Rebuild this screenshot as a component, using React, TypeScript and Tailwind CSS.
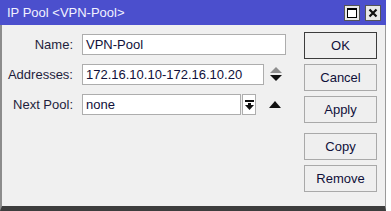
import React from "react";

const font = { fontFamily: '"Liberation Sans", Arial, sans-serif' };

const Field = ({ label, children }: { label: string; children: React.ReactNode }) => (
  <div className="flex items-center h-[21px]">
    <div className="w-[72px] text-right text-[13px] text-[#1e1e3c] pr-[1px]">{label}</div>
    <div className="ml-[8px] flex items-center h-full">{children}</div>
  </div>
);

const Input = ({ value, w }: { value: string; w: string }) => (
  <div
    className={`${w} h-full bg-white border border-[#adadad] flex items-center pl-[3px] text-[13px] text-[#10103a] leading-none`}
  >
    {value}
  </div>
);

const Btn = ({ label, primary, extra = "" }: { label: string; primary?: boolean; extra?: string }) => (
  <div
    className={`w-[73px] h-[27px] flex items-center justify-center text-[13px] text-[#10103a] bg-[#efefef] border ${
      primary ? "border-[#3c3c3c]" : "border-[#a9a9a9]"
    } ${extra}`}
  >
    {label}
  </div>
);

export default function App() {
  return (
    <div className="w-[391px] h-[211px] bg-white overflow-hidden" style={font}>
      <div className="w-[386px] h-[211px] flex flex-col">
        {/* title bar */}
        <div className="h-[25px] bg-[#4b4fcd] flex items-center pl-[7px] pr-[5px]">
          <span className="text-[13px] text-[#f2f2ff] flex-1">IP Pool &lt;VPN-Pool&gt;</span>
          <div className="flex gap-[5px]">
            <div className="w-[16px] h-[16px] bg-[#e8e8e8] border border-[#555] flex items-center justify-center">
              <div className="w-[10px] h-[10px] border border-black border-t-2 bg-white" />
            </div>
            <div className="w-[16px] h-[16px] bg-[#e8e8e8] border border-[#555] flex items-center justify-center">
              <svg width="10" height="10" viewBox="0 0 10 10">
                <path d="M1.5 1.5 L8.5 8.5 M8.5 1.5 L1.5 8.5" stroke="#111" strokeWidth="2.2" />
              </svg>
            </div>
          </div>
        </div>

        {/* body */}
        <div className="flex-1 bg-[#f0f0f0] border-l-2 border-l-[#8c8c8c] border-r border-r-[#9a9a9a] border-b-[5px] border-b-[#3d3d3d] flex">
          <div className="flex-1 flex flex-col gap-[9px] pt-[9px]">
            <Field label="Name:">
              <Input value="VPN-Pool" w="w-[204px]" />
            </Field>
            <Field label="Addresses:">
              <Input value="172.16.10.10-172.16.10.20" w="w-[182px]" />
              <svg className="ml-[6px]" width="12" height="15" viewBox="0 0 12 15">
                <path d="M6 0 L12 6 L0 6 Z" fill="#8e8e8e" />
                <path d="M0 8 L12 8 L6 14 Z" fill="#111" />
              </svg>
            </Field>
            <Field label="Next Pool:">
              <Input value="none" w="w-[159px]" />
              <div className="ml-[1px] w-[14px] h-full bg-white border border-[#adadad] flex items-center justify-center">
                <svg width="9" height="10" viewBox="0 0 9 10">
                  <rect x="0" y="0" width="9" height="2" fill="#111" />
                  <rect x="3" y="3" width="3" height="2" fill="#111" />
                  <path d="M0 5 L9 5 L4.5 10 Z" fill="#111" />
                </svg>
              </div>
              <svg className="ml-[13px]" width="12" height="7" viewBox="0 0 12 7">
                <path d="M6 0 L12 7 L0 7 Z" fill="#111" />
              </svg>
            </Field>
          </div>
          <div className="w-[81px] flex flex-col pt-[7px] gap-[5px]">
            <Btn label="OK" primary />
            <Btn label="Cancel" />
            <Btn label="Apply" />
            <Btn label="Copy" extra="mt-[5px]" />
            <Btn label="Remove" />
          </div>
        </div>
      </div>
    </div>
  );
}
